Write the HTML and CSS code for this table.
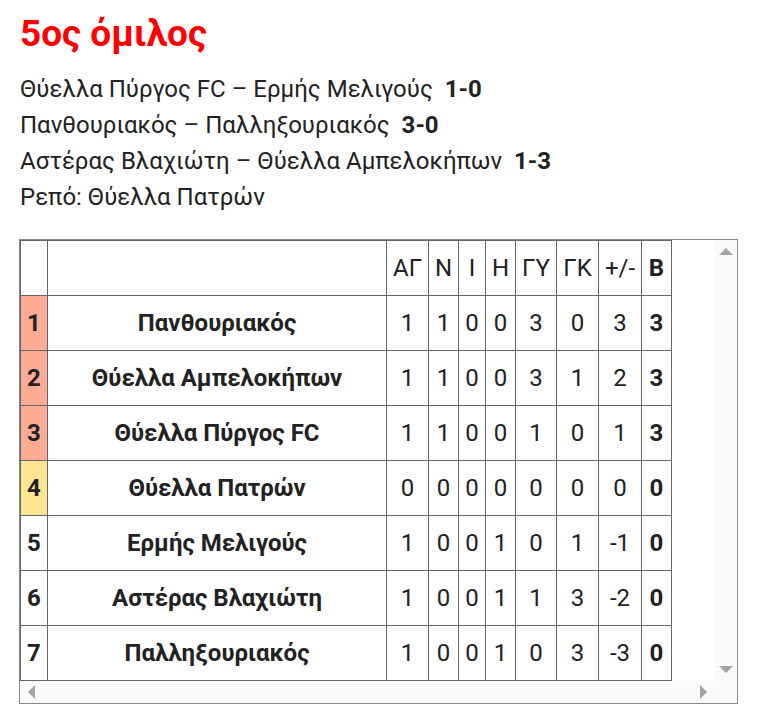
FILE: index.html
```html
<!DOCTYPE html>
<html lang="el">
<head>
<meta charset="utf-8">
<title>5ος όμιλος</title>
<link rel="stylesheet" href="styles.css">
</head>
<body>
<div class="page">
  <h2 class="title">5ος όμιλος</h2>
  <div class="results">
    <div class="line">Θύελλα Πύργος FC – Ερμής Μελιγούς&nbsp; <b>1-0</b></div>
    <div class="line">Πανθουριακός – Παλληξουριακός&nbsp; <b>3-0</b></div>
    <div class="line">Αστέρας Βλαχιώτη – Θύελλα Αμπελοκήπων&nbsp; <b>1-3</b></div>
    <div class="line">Ρεπό: Θύελλα Πατρών</div>
  </div>
  <div class="scrollbox">
    <div class="viewport">
      <table class="standings">
        <colgroup>
          <col class="c-pos"><col class="c-team"><col class="c-42"><col class="c-30"><col class="c-27"><col class="c-30"><col class="c-41"><col class="c-42"><col class="c-43"><col class="c-30">
        </colgroup>
        <tr class="head">
          <td></td><td></td><td>ΑΓ</td><td>Ν</td><td>Ι</td><td>Η</td><td>ΓΥ</td><td>ΓΚ</td><td>+/-</td><td class="pts">Β</td>
        </tr>
        <tr><td class="pos promo">1</td><td class="team">Πανθουριακός</td><td>1</td><td>1</td><td>0</td><td>0</td><td>3</td><td>0</td><td>3</td><td class="pts">3</td></tr>
        <tr><td class="pos promo">2</td><td class="team">Θύελλα Αμπελοκήπων</td><td>1</td><td>1</td><td>0</td><td>0</td><td>3</td><td>1</td><td>2</td><td class="pts">3</td></tr>
        <tr><td class="pos promo">3</td><td class="team">Θύελλα Πύργος FC</td><td>1</td><td>1</td><td>0</td><td>0</td><td>1</td><td>0</td><td>1</td><td class="pts">3</td></tr>
        <tr><td class="pos playoff">4</td><td class="team">Θύελλα Πατρών</td><td>0</td><td>0</td><td>0</td><td>0</td><td>0</td><td>0</td><td>0</td><td class="pts">0</td></tr>
        <tr><td class="pos">5</td><td class="team">Ερμής Μελιγούς</td><td>1</td><td>0</td><td>0</td><td>1</td><td>0</td><td>1</td><td>-1</td><td class="pts">0</td></tr>
        <tr><td class="pos">6</td><td class="team">Αστέρας Βλαχιώτη</td><td>1</td><td>0</td><td>0</td><td>1</td><td>1</td><td>3</td><td>-2</td><td class="pts">0</td></tr>
        <tr><td class="pos">7</td><td class="team">Παλληξουριακός</td><td>1</td><td>0</td><td>0</td><td>1</td><td>0</td><td>3</td><td>-3</td><td class="pts">0</td></tr>
      </table>
    </div>
    <div class="vbar"><span class="arrow up"></span><span class="arrow down"></span></div>
    <div class="hbar"><span class="arrow left"></span><span class="arrow right"></span></div>
    <div class="corner"></div>
  </div>
</div>
</body>
</html>
```

FILE: styles.css
```css
html, body {
  margin: 0;
  padding: 0;
  background: #ffffff;
}

body {
  font-family: Roboto, "Noto Sans", "DejaVu Sans", sans-serif;
  color: #222222;
}

.page {
  padding: 11px 0 0 19px;
}

.title {
  margin: 0 0 0 1px;
  font-size: 37px;
  line-height: 46px;
  font-weight: 700;
  color: #ff0000;
}

.results {
  margin: 14px 0 0 1px;
  font-size: 24px;
  line-height: 36px;
}

.results b {
  font-weight: 700;
}

.scrollbox {
  margin-top: 24px;
  width: 717px;
  border: 1px solid #888888;
  display: grid;
  grid-template-columns: 695px 22px;
  grid-template-rows: 441px 22px;
  background: #ffffff;
}

.viewport {
  overflow: hidden;
}

.standings {
  border-collapse: collapse;
  table-layout: fixed;
  width: 652px;
  font-size: 24px;
  color: #222222;
}

.standings td {
  border: 1px solid #666666;
  height: 54px;
  padding: 0;
  text-align: center;
  vertical-align: middle;
  white-space: nowrap;
}

.c-pos { width: 27px; }
.c-team { width: 339px; }
.c-42 { width: 42px; }
.c-30 { width: 30px; }
.c-27 { width: 27px; }
.c-41 { width: 41px; }
.c-43 { width: 43px; }

.standings .pos {
  font-weight: 700;
}

.standings .team {
  font-weight: 700;
}

.standings .pts {
  font-weight: 700;
}

.standings .promo {
  background: #fdab95;
}

.standings .playoff {
  background: #fee591;
}

.vbar, .hbar, .corner {
  background: #fafafa;
}

.vbar {
  display: flex;
  flex-direction: column;
  justify-content: space-between;
  align-items: center;
  padding: 8px 0 8px;
}

.hbar {
  display: flex;
  justify-content: space-between;
  align-items: center;
  padding: 0 8px;
}

.arrow {
  width: 0;
  height: 0;
  border-style: solid;
  border-color: transparent;
}

.arrow.up {
  border-width: 0 7px 7px 7px;
  border-bottom-color: #a3a3a3;
}

.arrow.down {
  border-width: 7px 7px 0 7px;
  border-top-color: #a3a3a3;
}

.arrow.left {
  border-width: 7px 7px 7px 0;
  border-right-color: #a3a3a3;
}

.arrow.right {
  border-width: 7px 0 7px 7px;
  border-left-color: #a3a3a3;
}
```
